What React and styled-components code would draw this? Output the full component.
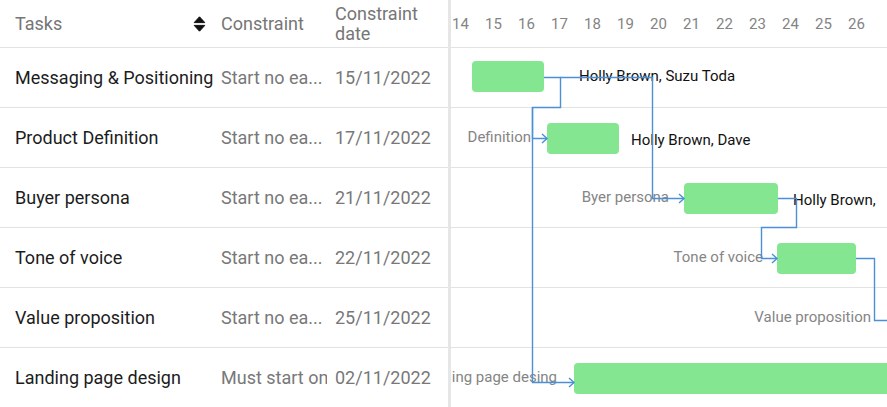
import React from 'react'
import styled, { createGlobalStyle } from 'styled-components'

const GlobalStyle = createGlobalStyle`
  html, body {
    margin: 0;
    padding: 0;
    background: #fff;
  }
  body {
    font-family: Roboto, 'Liberation Sans', sans-serif;
    overflow: hidden;
  }
`

const tasks = [
  { name: 'Messaging & Positioning', constraint: 'Start no ea...', date: '15/11/2022' },
  { name: 'Product Definition', constraint: 'Start no ea...', date: '17/11/2022' },
  { name: 'Buyer persona', constraint: 'Start no ea...', date: '21/11/2022' },
  { name: 'Tone of voice', constraint: 'Start no ea...', date: '22/11/2022' },
  { name: 'Value proposition', constraint: 'Start no ea...', date: '25/11/2022' },
  { name: 'Landing page design', constraint: 'Must start on', date: '02/11/2022' },
]

// timeline rows: bar left/width, label placements (px inside the chart canvas)
const chartRows = [
  { bar: { left: 21, width: 72, top: 13 }, resource: { text: 'Holly Brown, Suzu Toda', left: 128, top: 18 } },
  { bar: { left: 96, width: 72 }, title: { text: 'Definition', right: 80 }, resource: { text: 'Holly Brown, Dave', left: 180, top: 22 } },
  { bar: { left: 233, width: 94 }, title: { text: 'Byer persona', right: 218 }, resource: { text: 'Holly Brown,', left: 342, top: 22 } },
  { bar: { left: 326, width: 79 }, title: { text: 'Tone of voice', right: 312 } },
  { title: { text: 'Value proposition', right: 420 } },
  { bar: { left: 123, width: 400 }, title: { text: 'Landing page desing', right: 106 } },
]

const days = [14, 15, 16, 17, 18, 19, 20, 21, 22, 23, 24, 25, 26]

const links = [
  { points: '93,77.5 109.5,77.5 109.5,107.5 81.5,107.5 81.5,138.5 96,138.5', tip: [96, 138.5] },
  { points: '81.5,107.5 81.5,382.5 123,382.5', tip: [123, 382.5] },
  { points: '109.5,77.5 201.5,77.5 201.5,198.5 233,198.5', tip: [233, 198.5] },
  { points: '327,198.5 345.5,198.5 345.5,227.5 310.5,227.5 310.5,258.5 326,258.5', tip: [326, 258.5] },
  { points: '405,258.5 423.5,258.5 423.5,320.5 440,320.5' },
]

const Gantt = styled.div`
  display: flex;
  width: 887px;
  height: 407px;
  overflow: hidden;
  background: #fff;
`

const TablePanel = styled.div`
  width: 448px;
  flex: none;
`

const Splitter = styled.div`
  width: 3px;
  flex: none;
  background: #e6e6e6;
`

const TableRow = styled.div`
  display: grid;
  grid-template-columns: 213px 114px 1fr;
  align-items: center;
  height: ${p => (p.$header ? 48 : 60)}px;
  box-sizing: border-box;
  border-bottom: 1px solid #e2e2e2;
  font-size: 18px;
`

const HeadCell = styled.div`
  display: flex;
  align-items: center;
  justify-content: space-between;
  padding: ${p => (p.$first ? '0 7px 0 15px' : '0 0 0 8px')};
  color: #767676;
  line-height: 20px;
`

const Cell = styled.div`
  padding-left: ${p => (p.$first ? 15 : 8)}px;
  color: ${p => (p.$first ? '#1c1c1c' : '#787878')};
  white-space: nowrap;
  overflow: hidden;
`

const Chart = styled.div`
  flex: 1;
  position: relative;
  overflow: hidden;
`

const DayHeader = styled.div`
  display: flex;
  align-items: center;
  height: 48px;
  box-sizing: border-box;
  border-bottom: 1px solid #e2e2e2;
  margin-left: -7px;
`

const Day = styled.div`
  width: 33px;
  flex: none;
  text-align: center;
  font-size: 15px;
  color: #848484;
`

const ChartRow = styled.div`
  position: relative;
  height: 60px;
  box-sizing: border-box;
  border-bottom: 1px solid #e2e2e2;
  overflow: hidden;
`

const Bar = styled.div`
  position: absolute;
  top: ${p => p.$top}px;
  height: 31px;
  background: #84e690;
  border-radius: 4px;
`

const TaskTitle = styled.span`
  position: absolute;
  top: 19px;
  transform: translateX(-100%);
  font-size: 15px;
  line-height: 20px;
  color: #858585;
  white-space: nowrap;
`

const Resource = styled.span`
  position: absolute;
  top: ${p => p.$top}px;
  font-size: 15px;
  line-height: 20px;
  color: #111;
  white-space: nowrap;
`

const Links = styled.svg`
  position: absolute;
  left: 0;
  top: 0;
  width: 100%;
  height: 100%;
  pointer-events: none;
`

const SortIcon = () => (
  <svg width="13" height="16" viewBox="0 0 13 16">
    <path d="M1.2 6.6 L6.5 0.8 L11.8 6.6 Z" fill="#111" stroke="#111" strokeWidth="1" strokeLinejoin="round" />
    <path d="M1.2 9.4 L11.8 9.4 L6.5 15.2 Z" fill="#111" stroke="#111" strokeWidth="1" strokeLinejoin="round" />
  </svg>
)

const App = () => (
  <>
    <GlobalStyle />
    <Gantt>
      <TablePanel>
        <TableRow $header>
          <HeadCell $first>
            Tasks
            <SortIcon />
          </HeadCell>
          <HeadCell>Constraint</HeadCell>
          <HeadCell>Constraint<br />date</HeadCell>
        </TableRow>
        {tasks.map(t => (
          <TableRow key={t.name}>
            <Cell $first>{t.name}</Cell>
            <Cell>{t.constraint}</Cell>
            <Cell>{t.date}</Cell>
          </TableRow>
        ))}
      </TablePanel>
      <Splitter />
      <Chart>
        <DayHeader>
          {days.map(d => <Day key={d}>{d}</Day>)}
        </DayHeader>
        {chartRows.map((r, i) => (
          <ChartRow key={i}>
            {r.title && <TaskTitle style={{ left: r.title.right }}>{r.title.text}</TaskTitle>}
            {r.bar && <Bar $top={r.bar.top ?? 15} style={{ left: r.bar.left, width: r.bar.width }} />}
            {r.resource && <Resource $top={r.resource.top} style={{ left: r.resource.left }}>{r.resource.text}</Resource>}
          </ChartRow>
        ))}
        <Links>
          {links.map((l, i) => (
            <g key={i} fill="none" stroke="#4a8fd8" strokeWidth="1.4">
              <polyline points={l.points} />
              {l.tip && (
                <polyline points={`${l.tip[0] - 5},${l.tip[1] - 4.5} ${l.tip[0]},${l.tip[1]} ${l.tip[0] - 5},${l.tip[1] + 4.5}`} />
              )}
            </g>
          ))}
        </Links>
      </Chart>
    </Gantt>
  </>
)

export default App
